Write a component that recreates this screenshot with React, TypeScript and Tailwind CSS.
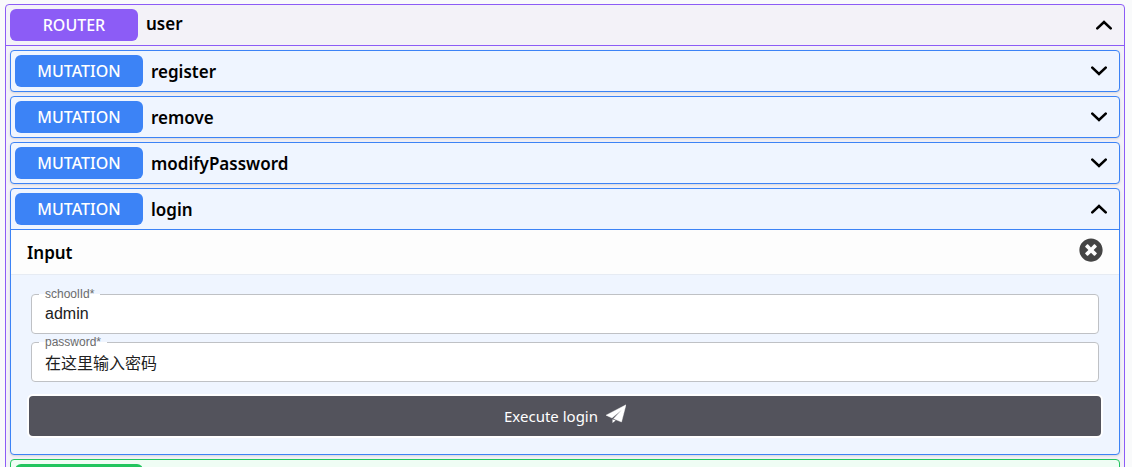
import { useState } from "react";
import type { ReactNode } from "react";
import { FaTimesCircle } from "react-icons/fa";

function Chevron({ open }: { open: boolean }) {
  return (
    <svg viewBox="0 0 16 16" className="size-4" fill="none" stroke="currentColor" strokeWidth="2.6" strokeLinecap="round" strokeLinejoin="miter" aria-hidden="true">
      <path d={open ? "M1.3 11.4 8 5l6.7 6.4" : "M1.3 4.6 8 11l6.7-6.4"} />
    </svg>
  );
}

function Plane() {
  return (
    <svg viewBox="0 0 20 20" className="-mt-1 size-5" fill="currentColor" aria-hidden="true">
      <path d="M20 .8 0 11.2 6 14 15.600 6 7.600 14.700 15.500 18Z" stroke="currentColor" strokeWidth=".4" strokeLinejoin="round" />
      <path d="M6.500 15.300v3.700l3.200-2.400Z" />
    </svg>
  );
}

function Badge({ children, tone }: { children: ReactNode; tone: string }) {
  return (
    <span className={`flex h-8 w-32 items-center justify-center rounded-md text-base font-medium text-white ${tone}`}>
      {children}
    </span>
  );
}

function Mutation({ name, initialOpen = false, children }: { name: string; initialOpen?: boolean; children?: ReactNode }) {
  const [open, setOpen] = useState(initialOpen);
  return (
    <section className="overflow-hidden rounded border border-[#3c83f6] bg-[#eff5ff] shadow-sm">
      <button type="button" aria-expanded={open} onClick={() => setOpen(!open)} className="flex w-full items-center p-1 pr-3 text-left">
        <Badge tone="bg-[#3c83f6]">MUTATION</Badge>
        <span className="ml-2 flex-1 pt-0.5 text-[17px] leading-7 font-semibold">{name}</span>
        <Chevron open={open} />
      </button>
      {open && children && <div className="border-t border-[#3c83f6]">{children}</div>}
    </section>
  );
}

function Field({ id, value }: { id: string; value: string }) {
  return (
    <div className="relative">
      <label htmlFor={id} className="absolute -top-2 left-2 px-1.5 text-xs leading-4 text-[#6b6b6b]">
        <span className="absolute inset-x-0 top-2 h-px bg-white" />
        <span className="relative">{id}*</span>
      </label>
      <input id={id} defaultValue={value} className="block h-10 w-full rounded border border-[#bfc1c5] bg-white px-[13px] text-base text-[#212121] outline-none" />
    </div>
  );
}

function LoginForm() {
  return (
    <form onSubmit={(e) => e.preventDefault()}>
      <div className="flex h-[45px] items-center justify-between border-b border-[#e6ebf3] bg-[#fdfdfd] px-4">
        <h2 className="pt-0.5 text-[17px] leading-7 font-semibold">Input</h2>
        <button type="reset" aria-label="Clear input" className="mb-1 text-[#444444]">
          <FaTimesCircle className="size-6" />
        </button>
      </div>
      <div className="px-4 pt-[19px] pb-4">
        <div className="flex flex-col gap-2 px-1 font-['Liberation_Sans','Noto_Sans_CJK_SC',sans-serif]">
          <Field id="schoolId" value="admin" />
          <Field id="password" value="在这里输入密码" />
        </div>
        <button type="submit" className="mt-3 flex h-11 w-full items-center justify-center gap-2 rounded-md border-2 border-white bg-[#53535c] text-[15px] text-white">
          Execute login
          <Plane />
        </button>
      </div>
    </form>
  );
}

export default function App() {
  const [open, setOpen] = useState(true);
  return (
    <main className="h-screen overflow-hidden bg-[#f9fafb] pt-1 pr-[7px] pl-[5px] font-['Noto_Sans','Noto_Sans_CJK_SC',sans-serif] text-black">
      <section className="rounded border border-[#8c5cf6] bg-[#f3f2f8]">
        <button type="button" aria-expanded={open} onClick={() => setOpen(!open)} className="flex w-full items-center p-1 pr-3 text-left">
          <Badge tone="bg-[#8c5cf6]">ROUTER</Badge>
          <span className="ml-2 flex-1 pb-0.5 text-[17px] leading-7 font-semibold">user</span>
          <Chevron open={open} />
        </button>
        {open && (
          <div className="flex flex-col gap-1 border-t border-[#8c5cf6] p-1">
            <Mutation name="register" />
            <Mutation name="remove" />
            <Mutation name="modifyPassword" />
            <Mutation name="login" initialOpen>
              <LoginForm />
            </Mutation>
            <section className="rounded border border-[#22c55e] bg-[#effdf4] p-1">
              <div className="h-8 w-32 rounded-md bg-[#22c55e]" />
            </section>
          </div>
        )}
      </section>
    </main>
  );
}
